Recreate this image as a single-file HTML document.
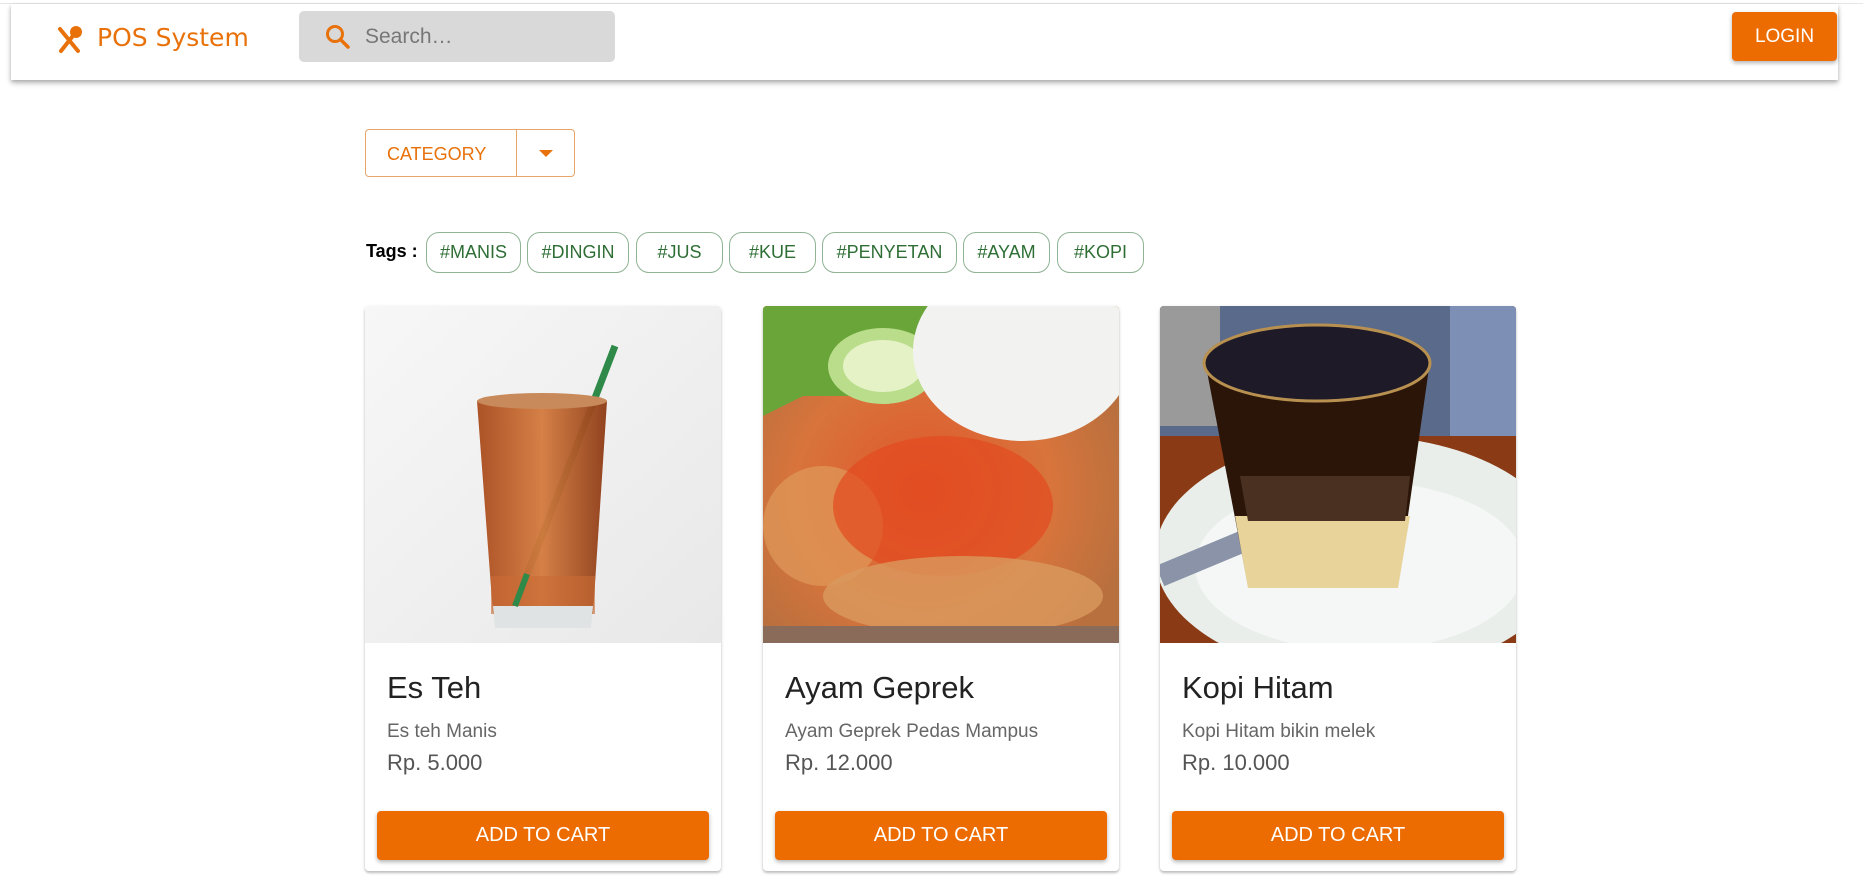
<!DOCTYPE html>
<html><head><meta charset="utf-8"><style>
*{box-sizing:border-box;margin:0;padding:0}
body{width:1863px;height:886px;overflow:hidden;background:#fff;font-family:"Liberation Sans",Arial,sans-serif;position:relative}
.topline{position:absolute;left:0;top:3px;width:1863px;height:1px;background:#e6e6e6}
.hdr{position:absolute;left:11px;top:4px;width:1827px;height:76px;background:#fff;box-shadow:0 2px 4px rgba(0,0,0,.25),0 4px 6px rgba(0,0,0,.12)}
.logo{position:absolute;left:86px;top:19px;font-family:"Comic Sans MS","DejaVu Sans",sans-serif;font-size:25px;color:#e8710a;letter-spacing:0}
.search{position:absolute;left:299px;top:11px;width:316px;height:51px;background:#d9d9d9;border-radius:5px}
.search span{position:absolute;left:66px;top:14px;font-size:21px;color:#777}
.login{position:absolute;left:1732px;top:12px;width:105px;height:49px;background:#ed6c02;border-radius:4px;color:#fff;font-size:19px;line-height:49px;text-align:center;box-shadow:0 2px 4px rgba(0,0,0,.3)}
.cat{position:absolute;left:365px;top:129px;width:210px;height:48px;border:1px solid #e8a56a;border-radius:4px}
.cat .t{position:absolute;left:21px;top:14px;font-size:18px;color:#e8710a}
.cat .d{position:absolute;left:150px;top:0;width:1px;height:46px;background:#e8a56a}
.cat .a{position:absolute;left:173px;top:20px;border-left:7px solid transparent;border-right:7px solid transparent;border-top:7px solid #e8710a}
.tags{position:absolute;left:366px;top:241px;font-size:18px;font-weight:bold;color:#000}
.chip{position:absolute;top:232px;height:41px;border:1px solid #8fb394;border-radius:13px;color:#2e6e35;font-size:18px;line-height:39px;text-align:center}
.card{position:absolute;top:306px;width:356px;height:565px;background:#fff;border-radius:4px;box-shadow:0 2px 2px rgba(0,0,0,.2),0 1px 4px rgba(0,0,0,.1);overflow:hidden}
.card svg{display:block}
.card h2{position:absolute;left:22px;top:364px;font-weight:normal;font-size:31px;color:#222}
.card .ds{position:absolute;left:22px;top:415px;font-size:19px;color:#666}
.card .pr{position:absolute;left:22px;top:444px;font-size:22px;color:#555}
.card .btn{position:absolute;left:12px;top:505px;width:332px;height:49px;background:#ed6c02;border-radius:4px;color:#fff;font-size:20px;line-height:49px;text-align:center;box-shadow:0 2px 4px rgba(0,0,0,.3)}
</style></head><body>
<div class="topline"></div>
<div class="hdr">
<svg style="position:absolute;left:45px;top:21px" width="28" height="30" viewBox="0 0 28 30"><path d="M4 4 L22 26" stroke="#e8710a" stroke-width="4" stroke-linecap="round"/><path d="M16 12 L5 26" stroke="#e8710a" stroke-width="4" stroke-linecap="round"/><ellipse cx="20" cy="7" rx="6" ry="6" fill="#e8710a"/></svg>
<div class="logo">POS System</div>
</div>
<div class="search"><svg style="position:absolute;left:25px;top:12px" width="28" height="28" viewBox="0 0 28 28"><circle cx="11" cy="11" r="7.5" fill="none" stroke="#e8710a" stroke-width="3"/><path d="M16.5 16.5 L24 24" stroke="#e8710a" stroke-width="3.5" stroke-linecap="round"/></svg><span>Search…</span></div>
<div class="login">LOGIN</div>
<div class="cat"><span class="t">CATEGORY</span><span class="d"></span><span class="a"></span></div>
<div class="tags">Tags :</div>
<div class="chip" style="left:426px;width:95px">#MANIS</div>
<div class="chip" style="left:527px;width:102px">#DINGIN</div>
<div class="chip" style="left:636px;width:87px">#JUS</div>
<div class="chip" style="left:729px;width:87px">#KUE</div>
<div class="chip" style="left:822px;width:135px">#PENYETAN</div>
<div class="chip" style="left:963px;width:87px">#AYAM</div>
<div class="chip" style="left:1057px;width:87px">#KOPI</div>

<div class="card" style="left:365px">
<svg width="356" height="337" viewBox="0 0 356 337"><defs><linearGradient id="bg1" x1="0" y1="0" x2="1" y2="1"><stop offset="0" stop-color="#f7f7f7"/><stop offset="1" stop-color="#e8e8e8"/></linearGradient><linearGradient id="tea" x1="0" y1="0" x2="1" y2="0"><stop offset="0" stop-color="#a84a1c"/><stop offset=".5" stop-color="#d47a3e"/><stop offset="1" stop-color="#8c3a14"/></linearGradient></defs>
<rect width="356" height="337" fill="url(#bg1)"/>
<path d="M250 40 L150 300" stroke="#2f8a4a" stroke-width="7"/>
<path d="M112 95 L242 95 L228 308 L128 308 Z" fill="url(#tea)" opacity=".95"/>
<rect x="126" y="270" width="104" height="38" fill="#c96b35" opacity=".6"/>
<path d="M128 300 L228 300 L226 322 L130 322 Z" fill="#dfe3e3"/>
<ellipse cx="177" cy="95" rx="65" ry="8" fill="#c88a5a"/>
<path d="M150 300 L162 268" stroke="#2f8a4a" stroke-width="6"/>
</svg>
<h2>Es Teh</h2><div class="ds">Es teh Manis</div><div class="pr">Rp. 5.000</div><div class="btn">ADD TO CART</div></div>

<div class="card" style="left:763px">
<svg width="356" height="337" viewBox="0 0 356 337"><defs><radialGradient id="ay" cx=".45" cy=".55" r=".6"><stop offset="0" stop-color="#e0542a"/><stop offset=".6" stop-color="#d8743c"/><stop offset="1" stop-color="#b8703e"/></radialGradient></defs>
<rect width="356" height="337" fill="#c98a52"/>
<rect width="356" height="337" fill="url(#ay)"/>
<path d="M0 0 L200 0 L190 70 L120 90 L40 90 L0 110 Z" fill="#6aa53a"/>
<ellipse cx="120" cy="60" rx="55" ry="38" fill="#b9dd8a"/>
<ellipse cx="120" cy="60" rx="40" ry="26" fill="#e4f2c6"/>
<ellipse cx="260" cy="45" rx="110" ry="90" fill="#f2f2f0"/>
<ellipse cx="60" cy="220" rx="60" ry="60" fill="#e09a5a" opacity=".7"/>
<ellipse cx="180" cy="200" rx="110" ry="70" fill="#e34a20" opacity=".7"/>
<ellipse cx="200" cy="290" rx="140" ry="40" fill="#d99a5e" opacity=".8"/>
<rect y="320" width="356" height="17" fill="#8a6a58"/>
</svg>
<h2>Ayam Geprek</h2><div class="ds">Ayam Geprek Pedas Mampus</div><div class="pr">Rp. 12.000</div><div class="btn">ADD TO CART</div></div>

<div class="card" style="left:1160px">
<svg width="356" height="337" viewBox="0 0 356 337">
<rect width="356" height="337" fill="#8a3a14"/>
<rect width="356" height="130" fill="#5a6a8a"/>
<rect x="290" width="66" height="130" fill="#7d8fb5"/>
<rect x="0" y="0" width="60" height="120" fill="#9a9a9a"/>
<ellipse cx="200" cy="250" rx="205" ry="120" fill="#e9eeea"/>
<ellipse cx="200" cy="260" rx="165" ry="85" fill="#f4f7f5"/>
<path d="M0 270 L120 220" stroke="#8a93a8" stroke-width="22"/>
<path d="M45 55 L270 55 L238 280 L88 280 Z" fill="#2a1508"/>
<path d="M75 210 L250 210 L238 282 L88 282 Z" fill="#e8d39a"/>
<path d="M80 170 L250 170 L245 215 L88 215 Z" fill="#4a3020"/>
<ellipse cx="157" cy="57" rx="113" ry="38" fill="#1e1a28" stroke="#b89050" stroke-width="3"/>
</svg>
<h2>Kopi Hitam</h2><div class="ds">Kopi Hitam bikin melek</div><div class="pr">Rp. 10.000</div><div class="btn">ADD TO CART</div></div>
</body></html>
